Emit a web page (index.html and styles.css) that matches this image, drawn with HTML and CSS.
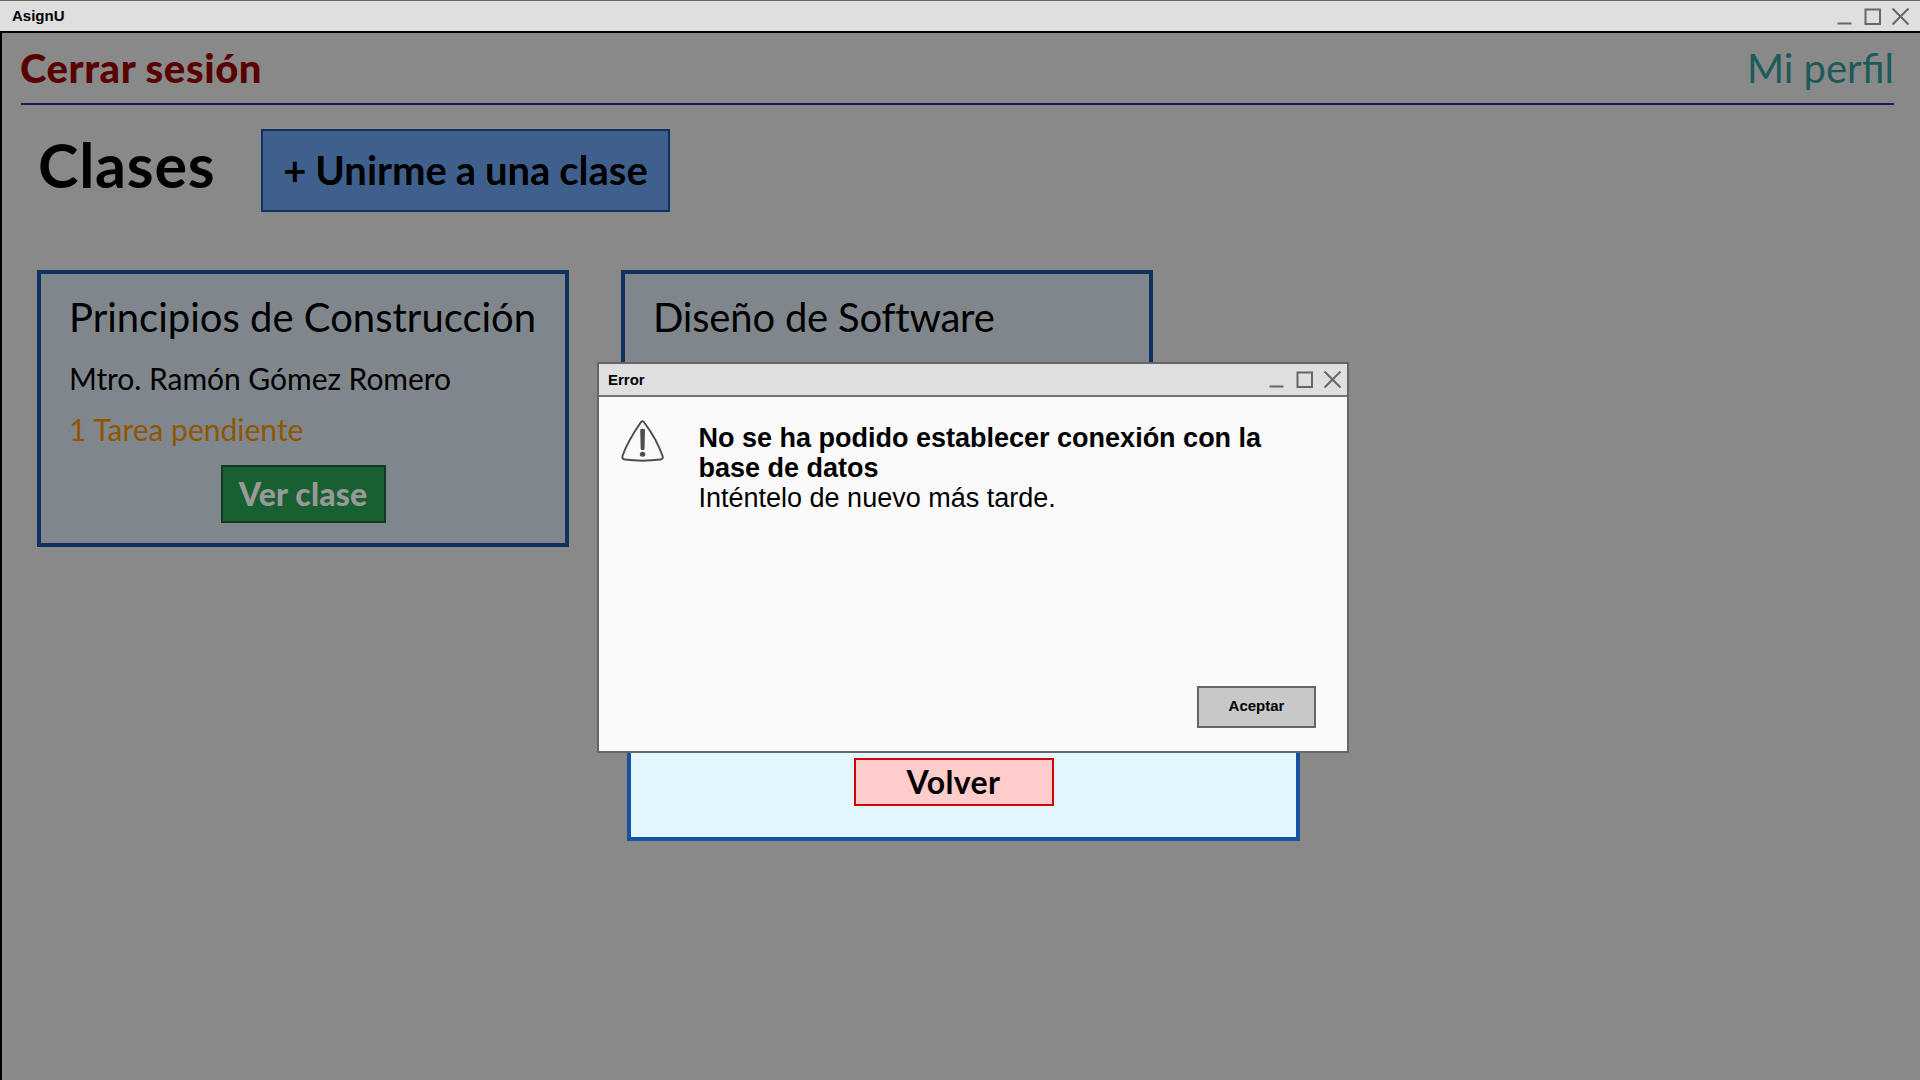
FILE: index.html
```html
<!DOCTYPE html>
<html lang="es">
<head>
<meta charset="utf-8">
<title>AsignU</title>
<link rel="stylesheet" href="styles.css">
</head>
<body>
<div class="window">
  <header class="titlebar titlebar-main">
    <span class="titlebar-name">AsignU</span>
    <svg class="controls" width="74" height="20" viewBox="0 0 74 20"><path d="M0.500 16.500H14.500M28.500 2.500H43V17H28.500ZM55.500 1.500L71.500 17.500M71.500 1.500L55.500 17.500"/></svg>
  </header>
  <main class="page">
    <nav class="nav">
      <a class="logout">Cerrar sesión</a>
      <a class="profile">Mi perfil</a>
    </nav>
    <section class="heading">
      <h1 class="heading-title">Clases</h1>
      <button class="join">+ Unirme a una clase</button>
    </section>
    <section class="cards">
      <article class="card">
        <h2 class="card-title">Principios de Construcción</h2>
        <p class="card-teacher">Mtro. Ramón Gómez Romero</p>
        <p class="card-pending">1 Tarea pendiente</p>
        <button class="card-open">Ver clase</button>
      </article>
      <article class="card">
        <h2 class="card-title card-title-second">Diseño de Software</h2>
      </article>
    </section>
  </main>
</div>
<div class="panel"><button class="back">Volver</button></div>
<div class="dialog" role="alertdialog">
  <header class="titlebar titlebar-dialog">
    <span class="titlebar-name">Error</span>
    <svg class="controls" width="74" height="20" viewBox="0 0 74 20"><path d="M0.500 15.500H14.500M28.500 1.500H43V16H28.500ZM55.500 .500L71.500 16.500M71.500 .500L55.500 16.500"/></svg>
  </header>
  <div class="dialog-body">
    <svg class="warning" width="44" height="44" viewBox="0 0 44 44"><path class="warning-outline" d="M20.400 4Q22.400 .6 24.600 4Q36.500 20 42.400 36.500Q43.800 40.200 40.200 40.600Q22.500 42.800 4.800 40.600Q1.400 40.200 2.800 36Q8.200 21.500 20.400 4Z"/><path class="warning-mark" d="M20.200 10.500Q22.600 8.800 25 10.500L24.500 30.200Q22.600 32 20.700 30.200Z"/><ellipse class="warning-mark" cx="22.600" cy="35.200" rx="2.700" ry="2.500"/></svg>
    <div class="message">
      <p class="message-title">No se ha podido establecer conexión con la<br>base de datos</p>
      <p class="message-text">Inténtelo de nuevo más tarde.</p>
    </div>
  </div>
  <button class="accept">Aceptar</button>
</div>
</body>
</html>
```
FILE: styles.css
```css
* { box-sizing: border-box; margin: 0; padding: 0; }
body { width: 1920px; height: 1080px; overflow: hidden; position: relative; background: #898989; color: #000; font-family: Lato, sans-serif; }
button { font-family: inherit; color: inherit; display: block; }
.window { display: flex; flex-direction: column; height: 1080px; }
.titlebar { display: flex; justify-content: space-between; background: #dfdfdf; font: bold 15px/18px "Liberation Sans", sans-serif; }
.titlebar-main { height: 33px; border-top: 1px solid #666; border-bottom: 2px solid #000; padding: 6px 9px 0 12px; }
.controls { fill: none; stroke: #666; stroke-width: 2; }
.page { flex: 1; border-left: 2px solid #000; padding: 11px 26px 0 18px; }
.nav { display: flex; justify-content: space-between; height: 61px; margin-left: 1px; border-bottom: 2px solid #161d50; font-size: 40px; line-height: 48px; }
.logout { font-weight: 900; color: #590000; letter-spacing: .58px; margin-left: -1px; }
.profile { color: #1d5b5a; }
.heading { display: flex; gap: 48px; padding: 24px 0 0 18px; }
.heading-title { font-size: 61px; font-weight: 700; line-height: 72px; letter-spacing: .8px; width: 175px; white-space: nowrap; }
.join { width: 409px; height: 83px; padding-bottom: 2px; border: 2px solid #0e315f; background: #3f608d; font-size: 40px; font-weight: 700; line-height: 48px; letter-spacing: 0; word-spacing: -.8px; white-space: nowrap; }
.cards { display: flex; gap: 52px; padding: 58px 0 0 17px; }
.card { width: 532px; height: 277px; border: 4px solid #0e315f; background: #80878c; padding: 19px 28px 0 28px; white-space: nowrap; }
.card-title { font-size: 40px; line-height: 48px; font-weight: 400; }
.card-title-second { letter-spacing: -.2px; }
.card-teacher, .card-pending { font-size: 30px; line-height: 36px; }
.card-teacher { margin-top: 19px; letter-spacing: -.04px; }
.card-pending { margin-top: 15px; color: #8f5500; }
.card-open { width: 165px; height: 58px; margin: 18px auto 0; border: 2px solid #123a22; background: #186031; color: #999; font-size: 32px; line-height: 38px; font-weight: 900; letter-spacing: .15px; }
.panel { position: absolute; left: 627px; top: 560px; width: 673px; height: 281px; display: flex; justify-content: center; align-items: flex-end; padding: 0 20px 31px 0; background: #e3f5ff; border: 4px solid #1752a0; }
.back { width: 200px; height: 48px; border: 2px solid #d90000; background: #fcc; font-size: 32px; line-height: 38px; font-weight: 700; letter-spacing: .4px; }
.dialog { position: absolute; left: 597px; top: 362px; width: 752px; height: 391px; display: flex; flex-direction: column; background: #fafafa; border: 2px solid #666; }
.titlebar-dialog { height: 33px; border-bottom: 2px solid #737373; padding: 7px 4px 0 9px; }
.dialog-body { display: flex; gap: 34.5px; padding: 22px 0 0 21px; }
.warning-outline { fill: none; stroke: #4d4d4d; stroke-width: 2; }
.warning-mark { fill: #4d4d4d; }
.message { padding-top: 4px; font-family: "Liberation Sans", sans-serif; font-size: 27px; line-height: 30px; white-space: nowrap; }
.message-title { font-weight: 700; }
.accept { width: 119px; height: 42px; margin: auto 31px 23px auto; border: 2px solid #666; background: #c8c8c8; font: bold 15px/18px "Liberation Sans", sans-serif; padding-bottom: 2px; }
```
